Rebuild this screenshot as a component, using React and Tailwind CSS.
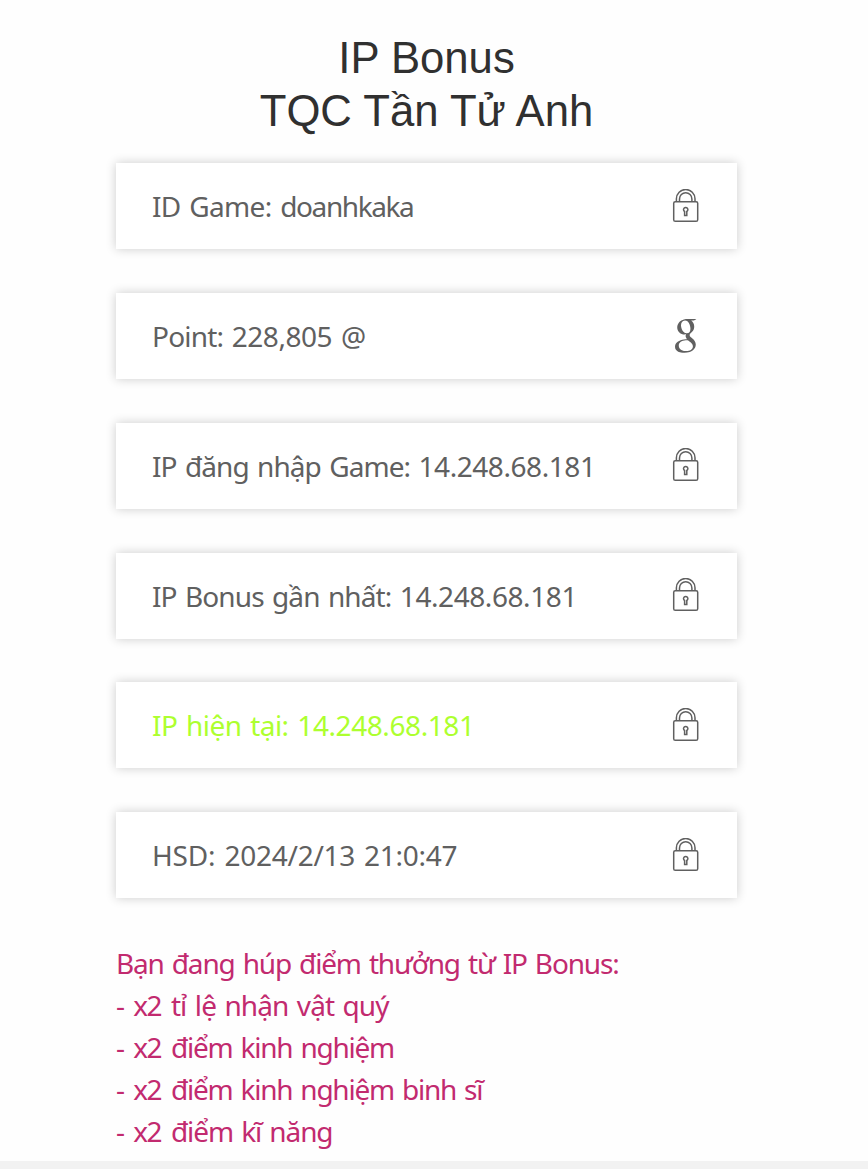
import { TfiGoogle } from "react-icons/tfi";

const rows = [
  { label: "ID Game: ", value: "doanhkaka", icon: "lock", labelClass: "tracking-[-0.65px]", valueClass: "tracking-[-1.4px]", iconPos: "mt-[26px]" },
  { label: "Point: ", value: "228,805 @", icon: "google", labelClass: "tracking-[-0.8px]", valueClass: "tracking-[-0.45px]", iconPos: "mt-[26px]" },
  { label: "IP đăng nhập Game: ", value: "14.248.68.181", icon: "lock", labelClass: "tracking-[-0.93px]", valueClass: "tracking-[-0.44px]", iconPos: "mt-[25px]" },
  { label: "IP Bonus gần nhất: ", value: "14.248.68.181", icon: "lock", labelClass: "tracking-[-0.9px]", valueClass: "tracking-[-0.42px]", iconPos: "mt-[25px]" },
  { label: "IP hiện tại: ", value: "14.248.68.181", icon: "lock", labelClass: "tracking-[-0.55px]", valueClass: "tracking-[-0.42px]", iconPos: "mt-[26px]", active: true },
  { label: "HSD: ", value: "2024/2/13 21:0:47", icon: "lock", labelClass: "tracking-[-0.15px]", valueClass: "tracking-[-0.28px]", iconPos: "mt-[26px]" },
];

const bonuses = [
  { text: "tỉ lệ nhận vật quý", tracking: "tracking-[-0.9px]" },
  { text: "điểm kinh nghiệm", tracking: "tracking-[-1.23px]" },
  { text: "điểm kinh nghiệm binh sĩ", tracking: "tracking-[-1.24px]" },
  { text: "điểm kĩ năng", tracking: "tracking-[-1.1px]" },
];

function LockIcon() {
  return (
    <svg width="34" height="34" viewBox="0 0 34 34" fill="none" stroke="#606060" strokeWidth="1.5">
      <rect x="4.7" y="12.7" width="24" height="19.6" rx="1.6" />
      <path d="M7.4 12.5V9.8a9.3 9.3 0 0 1 18.6 0v2.7" />
      <path d="M10.5 12.5V9.9a6.2 6.2 0 0 1 12.4 0v2.6" />
      <path d="M15.6 22.5a2.2 2.2 0 1 1 2.2 0v4h-2.2z" />
    </svg>
  );
}

// only the "g" of the google plus glyph is shown
function GoogleIcon() {
  return (
    <TfiGoogle className="ml-[6px] h-[34px] w-[34px] text-[#606060] [clip-path:polygon(0_0,63%_0,63%_7%,59%_9%,59%_36%,67%_42%,67%_100%,0_100%)]" />
  );
}

function InfoRow({ row }) {
  return (
    <div className="flex h-[86px] justify-between bg-white pl-9 pr-[34px] shadow-[0_0_10px_rgba(0,0,0,0.2)]">
      <p
        className={`whitespace-pre text-[28px] leading-[86px] [word-spacing:2px] ${row.active ? "text-[#adff2f]" : "text-[#606060]"}`}
      >
        <span className={row.labelClass}>{row.label}</span>
        <span className={row.valueClass}>{row.value}</span>
      </p>
      <span className={`h-[34px] w-[34px] shrink-0 ${row.iconPos}`}>
        {row.icon === "lock" ? <LockIcon /> : <GoogleIcon />}
      </span>
    </div>
  );
}

export default function App() {
  return (
    <div className="h-[1169px] overflow-hidden bg-[#f2f2f2] font-['Noto_Sans',sans-serif]">
      <div className="h-[1161px] bg-[#fefefe] pl-[116px] pr-[131px] pt-[31px]">
        <h1 className="text-center font-['Liberation_Sans',Arial,sans-serif] text-[43.7px] leading-[53px] text-[#303030]">
          IP Bonus
          <br />
          TQC Tần Tử Anh
        </h1>

        <div className="mt-[26px] flex flex-col gap-[43.85px]">
          {rows.map((row) => (
            <InfoRow key={row.label} row={row} />
          ))}
        </div>

        <div className="mt-11 whitespace-pre text-[28px] leading-[42px] text-[#c22a6f] [word-spacing:2px]">
          <p className="tracking-[-1.18px]">Bạn đang húp điểm thưởng từ IP Bonus:</p>
          {bonuses.map((line) => (
            <p key={line.text}>
              <span className="tracking-[-1.5px] [word-spacing:4px]">{"- x2 "}</span>
              <span className={line.tracking}>{line.text}</span>
            </p>
          ))}
        </div>
      </div>
    </div>
  );
}
